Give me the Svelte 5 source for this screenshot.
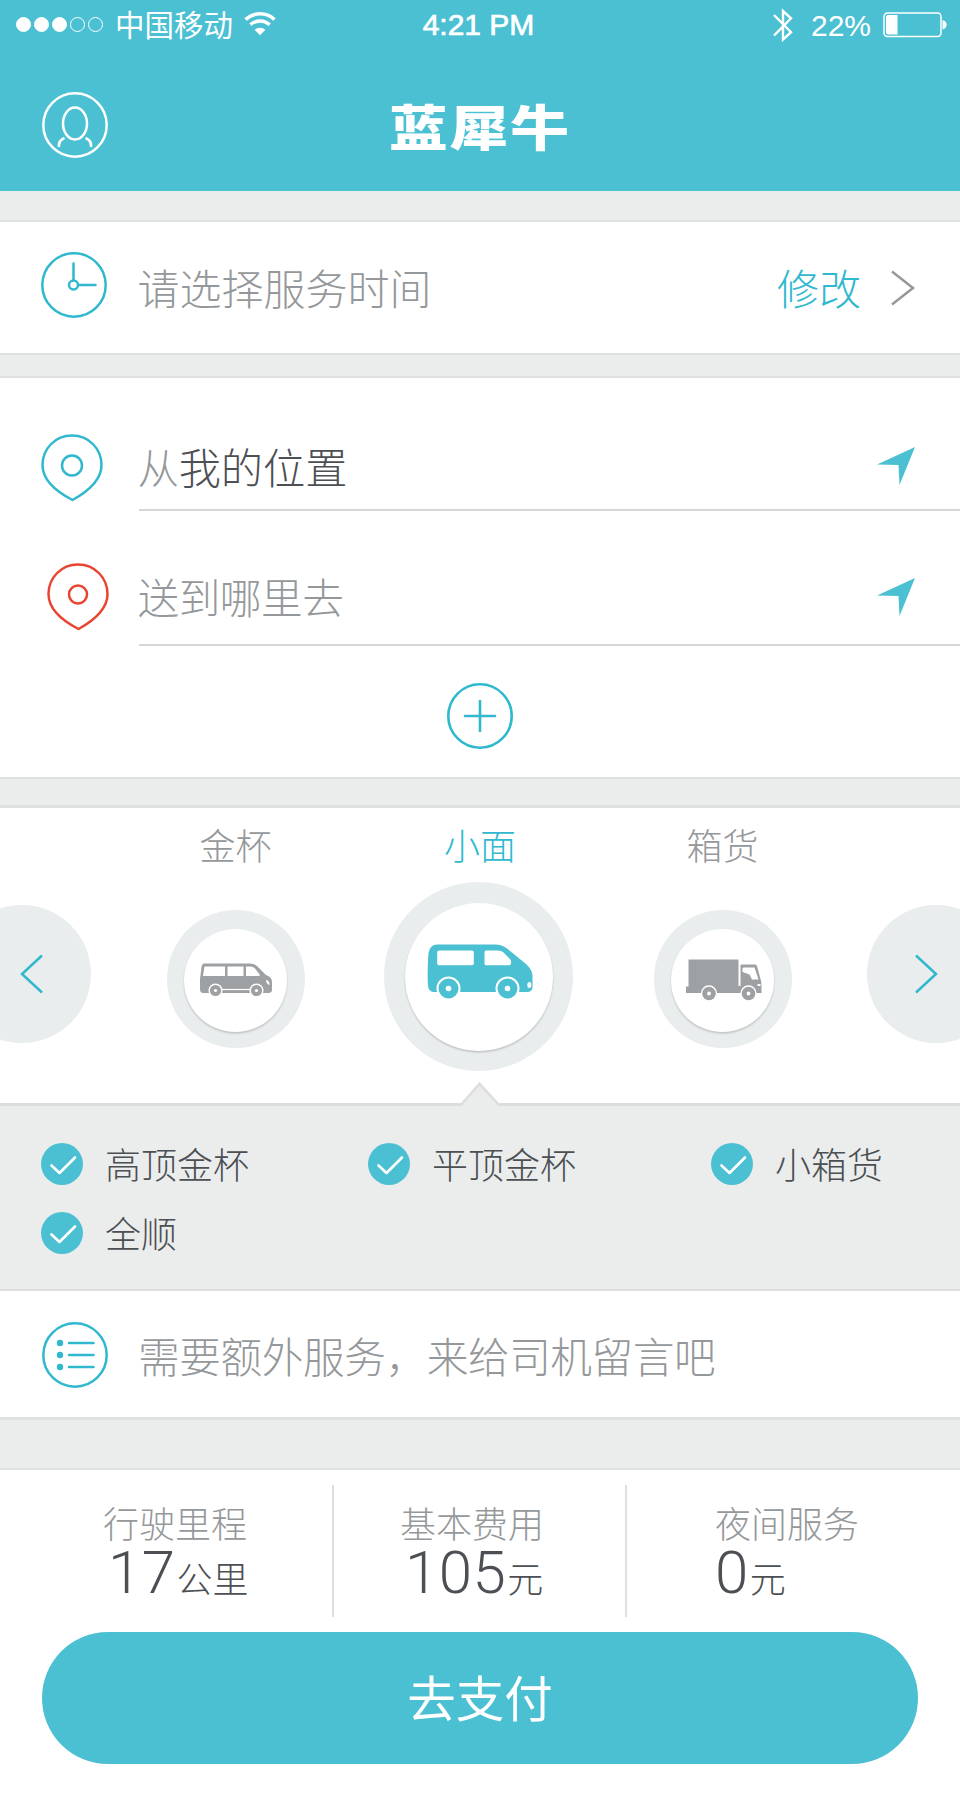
<script>
  const signal = [true, true, true, false, false];
  const places = [
    { kind: 'from', prefix: '从', value: '我的位置' },
    { kind: 'to', prefix: '送到哪里去', value: '' }
  ];
  const vehicles = [
    { name: '金杯', icon: 'van', active: false },
    { name: '小面', icon: 'mini', active: true },
    { name: '箱货', icon: 'truck', active: false }
  ];
  const options = ['高顶金杯', '平顶金杯', '小箱货', '全顺'];
  const costs = [
    { label: '行驶里程', amount: '17', unit: '公里' },
    { label: '基本费用', amount: '105', unit: '元' },
    { label: '夜间服务', amount: '0', unit: '元' }
  ];
</script>

<div class="app">
  <header>
    <div class="status">
      <div class="left">
        <div class="dots">
          {#each signal as on}<i class:on></i>{/each}
        </div>
        <span class="carrier">中国移动</span>
        <svg class="wifi" width="32" height="24" viewBox="0 0 32 24" fill="none" stroke="#fff">
          <path d="M1.5 7.6a21 21 0 0 1 29 0" stroke-width="3.4" />
          <path d="M6.4 12.8a14 14 0 0 1 19.2 0" stroke-width="3.4" />
          <path d="M16 23.2l-5.4-5.4a8 8 0 0 1 10.8 0z" fill="#fff" stroke="none" />
        </svg>
      </div>
      <span class="clock">4:21 PM</span>
      <div class="right">
        <svg width="20" height="35" viewBox="0 0 20 35" fill="none" stroke="#fff" stroke-width="2.4">
          <path d="M1 7l17 17.2-8 7.3V3l8 7.3L1 27.5" />
        </svg>
        <span class="percent">22%</span>
        <svg width="64" height="26" viewBox="0 0 64 26">
          <rect x="1" y="1" width="57" height="23.5" rx="3.5" fill="none" stroke="#fff" stroke-width="1.5" />
          <path d="M5 3h9.500v19.500H5a2 2 0 0 1-2-2V5a2 2 0 0 1 2-2z" fill="#fff" />
          <path d="M59.500 8c5.500 1 5.500 8.500 0 9.500z" fill="#fff" />
        </svg>
      </div>
    </div>
    <div class="nav">
      <svg class="user" width="66" height="66" viewBox="0 0 66 66" fill="none" stroke="#fff" stroke-width="2.5">
        <circle cx="33" cy="33" r="31.700" />
        <ellipse cx="33" cy="31.500" rx="12" ry="16" />
        <path d="M22.500 46c-4 1.500-6 4.500-5.500 9M43.500 46c4 1.500 6 4.500 5.500 9" />
      </svg>
      <h1>蓝犀牛</h1>
    </div>
  </header>

  <div class="gap first"></div>

  <section class="time">
    <svg width="66" height="66" viewBox="0 0 66 66" fill="none" stroke="#30b8ce" stroke-width="2.5" stroke-linecap="round">
      <circle cx="33" cy="33" r="31.700" />
      <circle cx="32.500" cy="33" r="4.500" />
      <path d="M32.500 28V11.500M37.500 33H54.500" />
    </svg>
    <span class="txt">请选择服务时间</span>
    <span class="edit">修改</span>
    <svg width="24" height="36" viewBox="0 0 24 36" fill="none" stroke="#95989a" stroke-width="2.500">
      <path d="M1 1.500L22 18L1 34.500" />
    </svg>
  </section>

  <div class="gap second"></div>

  <section class="places">
    {#each places as p}
      <div class="place {p.kind}">
        <svg class="pin" width="62" height="68" viewBox="0 0 62 68" fill="none" stroke-width="2.500">
          <path d="M31 1.500C14 1.500 1.500 15 1.500 31C1.500 47 16 58 31.500 66C46 58 60.500 47 60.500 31C60.500 15 48 1.500 31 1.500z" />
          <circle cx="31" cy="31.500" r={p.kind === 'from' ? 10 : 9} />
        </svg>
        <div class="field">
          <span>{p.prefix}{#if p.value}<b>{p.value}</b>{/if}</span>
          <svg width="38" height="38" viewBox="0 0 38 38"><path d="M0 17.500L38 0L22.500 38L21.500 18z" fill="#4bc0d3" /></svg>
        </div>
      </div>
    {/each}
    <svg class="add" width="66" height="66" viewBox="0 0 66 66" fill="none" stroke="#30b8ce" stroke-width="2.600" stroke-linecap="round">
      <circle cx="33" cy="33" r="31.700" />
      <path d="M33 18V48M18 33H48" />
    </svg>
  </section>

  <div class="gap third"></div>

  <section class="vehicles">
    <div class="ball prev">
      <svg width="24" height="40" viewBox="0 0 24 40" fill="none" stroke="#30b8ce" stroke-width="2.500"><path d="M22 1.500L2 20L22 38.500" /></svg>
    </div>
    {#each vehicles as v}
      <div class="vehicle" class:active={v.active}>
        <span>{v.name}</span>
        <div class="slot">
          <div class="ring">
            <div class="disc">
              {#if v.icon === 'van'}
                <svg width="72" height="34" viewBox="0 0 72 34">
                  <path d="M4 0.500H50Q54 0.500 57 3L66 12Q72 14 72 19V27Q72 30 68 30H3Q0 30 0 26V16L1.500 4Q2 0.500 4 0.500z" fill="#9da1a4" />
                  <path d="M4.500 3.500H25V13H3zM27.500 3.500H43.500V13H27.500zM46 3.500H50.500Q53 3.500 55 5.500L60 12Q60 13 58 13H46zM66 17Q70 18 69.500 22Q66 21 66 17z" fill="#fff" />
                  <path d="M21 26.500H51" stroke="#fff" stroke-width="1.200" />
                  <circle cx="15.500" cy="27.500" r="7" fill="#fff" /><circle cx="15.500" cy="27.500" r="5.600" fill="#9da1a4" /><circle cx="15.500" cy="27.500" r="1.600" fill="#fff" />
                  <circle cx="56.500" cy="27.500" r="7" fill="#fff" /><circle cx="56.500" cy="27.500" r="5.600" fill="#9da1a4" /><circle cx="56.500" cy="27.500" r="1.600" fill="#fff" />
                </svg>
              {:else if v.icon === 'mini'}
                <svg width="106" height="55" viewBox="0 0 106 55">
                  <path d="M10 0.500H68Q75 0.500 80 4.500L99 20Q105.500 26 105.500 32V43Q105.500 48 100 48H7Q2 48 1 42Q0 28 1.500 9Q3 0.500 10 0.500z" fill="#4bc0d3" />
                  <path d="M12 6.500H45Q46.800 6.500 46.800 8.500V19.500Q46.800 21.300 45 21.300H12Q10.200 21.300 10.200 19.500V8.500Q10.200 6.500 12 6.500zM59 6.500H71Q74 6.500 76 8L83 15Q84.500 17 84 19.500Q83.800 21.300 82 21.300H59Q57.500 21.300 57.500 19.500V8.500Q57.500 6.500 59 6.500z" fill="#fff" />
                  <ellipse cx="102.300" cy="41" rx="2" ry="3" fill="#fff" />
                  <circle cx="21.500" cy="44.500" r="12" fill="#fff" /><circle cx="21.500" cy="44.500" r="10" fill="#4bc0d3" /><circle cx="21.500" cy="44.500" r="2.800" fill="#fff" />
                  <circle cx="80.500" cy="44.500" r="12" fill="#fff" /><circle cx="80.500" cy="44.500" r="10" fill="#4bc0d3" /><circle cx="80.500" cy="44.500" r="2.800" fill="#fff" />
                </svg>
              {:else}
                <svg class="truck" width="76" height="42" viewBox="0 0 76 42">
                  <path d="M2.500 0.500H52.500V27H54.500V6Q54.500 5.500 55.500 5.500H69Q70.500 5.500 71 7L74.500 20Q75.500 23 75.500 26V34H0V27.500H2.500z" fill="#9da1a4" />
                  <path d="M57.500 8.500H68.500L72.500 20.500H66L63.500 15.500L56.500 13V9.500z" fill="#fff" />
                  <path d="M71.500 25H74.500V27H71.500z" fill="#fff" />
                  <circle cx="23" cy="34.500" r="8.200" fill="#fff" /><circle cx="23" cy="34.500" r="6.800" fill="#9da1a4" /><circle cx="23" cy="34.500" r="1.900" fill="#fff" />
                  <circle cx="62.500" cy="34.500" r="8.200" fill="#fff" /><circle cx="62.500" cy="34.500" r="6.800" fill="#9da1a4" /><circle cx="62.500" cy="34.500" r="1.900" fill="#fff" />
                </svg>
              {/if}
            </div>
          </div>
        </div>
      </div>
    {/each}
    <div class="ball next">
      <svg width="24" height="40" viewBox="0 0 24 40" fill="none" stroke="#30b8ce" stroke-width="2.500"><path d="M2 1.500L22 20L2 38.500" /></svg>
    </div>
  </section>

  <section class="options">
    <svg class="notch" width="40" height="25" viewBox="0 0 40 25"><path d="M0 25L1.500 23L19.500 1.500L39 23L40 25z" fill="#ebeded" /><path d="M0.500 23.500L19.500 1.800L39.500 23.500" fill="none" stroke="#dcdddd" stroke-width="2.500" /></svg>
    {#each options as o}
      <div class="option">
        <svg width="42" height="42" viewBox="0 0 42 42"><circle cx="21" cy="21" r="21" fill="#4bc0d3" /><path d="M10.500 22.500L18.500 30L34 14.500" fill="none" stroke="#fff" stroke-width="2.600" stroke-linecap="round" stroke-linejoin="round" /></svg>
        <span>{o}</span>
      </div>
    {/each}
  </section>

  <section class="message">
    <svg width="66" height="66" viewBox="0 0 66 66" fill="none" stroke="#30b8ce" stroke-width="2.500" stroke-linecap="round">
      <circle cx="33" cy="33" r="31.700" />
      <path d="M27 21H51.500M27 33H51.500M27 45H51.500" />
      <g fill="#30b8ce" stroke="none"><circle cx="18" cy="21" r="3.200" /><circle cx="18" cy="33" r="3.200" /><circle cx="18" cy="45" r="3.200" /></g>
    </svg>
    <span>需要额外服务，来给司机留言吧</span>
  </section>

  <div class="gap fourth"></div>

  <footer>
    <div class="costs">
      {#each costs as c}
        <div class="cost">
          <div class="label">{c.label}</div>
          <div class="value"><span class="num">{c.amount}</span><span class="unit">{c.unit}</span></div>
        </div>
      {/each}
    </div>
    <button>去支付</button>
  </footer>
</div>

<style>
  :global(body) { background: #fff; }
  .app {
    width: 960px;
    height: 1800px;
    overflow: hidden;
    background: #fff;
    color: #95989a;
    font-family: "Noto Sans CJK SC", sans-serif;
    font-weight: 300;
    font-size: 41.7px;
  }
  svg { display: block; flex: none; }
  span { white-space: nowrap; }

  header { height: 191px; background: #4bc0d3; color: #fff; }
  .status {
    display: grid;
    grid-template-columns: 1fr auto 1fr;
    align-items: center;
    height: 50px;
    padding: 0 13px 0 16px;
  }
  .left, .right, .dots { display: flex; align-items: center; }
  .dots { gap: 3px; margin-top: -1px; }
  .dots i { box-sizing: border-box; width: 15px; height: 15px; border: 1.5px solid #fff; border-radius: 50%; }
  .dots .on { background: #fff; }
  .carrier { margin: -5px 0 0 12px; font-size: 29.500px; line-height: 40px; font-weight: 400; }
  .wifi { margin: -2px 0 0 11px; }
  .clock, .percent { font: 400 30px/36px "Liberation Sans", Arial, sans-serif; }
  .clock { margin-right: 6px; -webkit-text-stroke: 0.7px #fff; }
  .right { justify-content: flex-end; }
  .percent { margin: 1px 12px 0 18px; }
  .nav {
    display: grid;
    grid-template-columns: 66px 1fr 66px;
    align-items: center;
    height: 66px;
    padding: 41px 42px 0;
  }
  .user { margin-top: 1px; }
  h1 { margin: 0; font-size: 58px; line-height: 66px; font-weight: 900; letter-spacing: 2px; text-align: center; transform: scale(1.012, 0.85); }

  .gap { box-sizing: border-box; background: #ebeded; border: 0 solid #dfe0e0; }
  .first { height: 31px; border-bottom-width: 2px; }
  .second { height: 25px; border-width: 2px 0; }
  .third { height: 31px; border-width: 2px 0 3px; }
  .fourth { height: 53px; border-width: 3px 0 2px; }

  .time { display: flex; align-items: center; height: 131px; padding: 0 45px 0 41px; }
  .time > svg:first-child { margin-top: -5px; }
  .txt { flex: 1; margin: -2px 0 0 30.500px; font-size: 42px; }
  .edit { margin: -2px 30px 0 0; color: #30b8ce; font-size: 42px; }

  .places { height: 399px; }
  .place { display: flex; }
  .from { height: 133px; }
  .to { height: 135px; }
  .pin { margin: 56px 0 0 41px; stroke: #30b8ce; }
  .to .pin { margin: 52px 0 0 47px; stroke: #e94431; }
  .field {
    display: flex;
    align-items: center;
    justify-content: space-between;
    flex: 1;
    margin-left: 36px;
    padding: 44px 45px 0 0;
    border-bottom: 2px solid #d5d6d7;
  }
  .field span { margin-left: -1.500px; }
  .from b { margin-left: -0.500px; font-size: 42.200px; }
  .to .field { margin-left: 30px; padding-top: 37px; letter-spacing: -0.5px; }
  .field b { color: #4c4f53; font-weight: 300; }
  .to .field svg { margin-top: 1px; }
  .add { margin: 37px auto 0; }

  .vehicles { display: grid; grid-template-columns: 91px 289px 198px 289px 93px; height: 295px; overflow: hidden; }
  .ball { display: flex; align-items: center; width: 138px; height: 138px; margin-top: 97px; border-radius: 50%; background: #e9eded; }
  .prev { margin-left: -47px; justify-content: center; }
  .next { justify-content: center; }
  .prev svg { margin-left: 20px; }
  .next svg { margin-right: 21px; }
  .vehicle { display: flex; flex-direction: column; align-items: center; font-size: 36px; }
  .vehicle > span { height: 74px; line-height: 73px; }
  .slot { display: flex; align-items: center; height: 194px; }
  .ring { display: flex; align-items: center; justify-content: center; width: 138px; height: 138px; border-radius: 50%; background: #e9eded; }
  .disc { display: flex; align-items: center; justify-content: center; width: 103px; height: 103px; margin-top: 2px; border-radius: 50%; background: #fff; box-shadow: 0 1.500px 2px rgb(0 0 0 / 0.18); }
  .disc svg { margin-top: -1px; }
  .disc .truck { margin-left: 2px; }
  .active { color: #30b8ce; }
  .active > span { margin-left: 2px; }
  .active .slot { height: 189px; margin-left: -1px; }
  .active .ring { width: 189px; height: 189px; }
  .active .disc { width: 148px; height: 148px; margin-top: 0; }
  .active .disc svg { margin: -11px 0 0 2px; }

  .options {
    position: relative;
    box-sizing: border-box;
    display: grid;
    grid-template-columns: 327px 343px 1fr;
    grid-auto-rows: 69px;
    height: 188px;
    padding: 23px 0 0 41px;
    border: solid #dcdddd;
    border-width: 3px 0 2px;
    background: #ebeded;
    color: #4c4f53;
    font-size: 36px;
  }
  .notch { position: absolute; left: 460px; top: -24px; }
  .option { display: flex; align-items: center; gap: 22px; }
  .option span { margin-top: -2px; }

  .message { display: flex; align-items: center; gap: 30px; height: 128px; margin-bottom: -2px; padding-left: 42px; letter-spacing: -0.450px; }

  .fourth { position: relative; }
  .costs { display: grid; grid-template-columns: 334px 293px 1fr; height: 132px; padding-top: 15px; }
  .cost { box-sizing: border-box; padding-left: 103px; border-right: 2px solid #dfe0e1; }
  .cost:nth-child(2) { padding-left: 66px; }
  .cost:nth-child(3) { padding-left: 88px; border: 0; }
  .label { font-size: 36px; line-height: 40px; padding-top: 17px; }
  .value { display: flex; align-items: baseline; height: 60px; margin-top: 1px; padding-left: 5px; color: #4c4f53; line-height: 60px; }
  .cost:nth-child(3) .value { padding-left: 0; }
  .num { font-family: Roboto, "Liberation Sans", sans-serif; font-size: 60px; letter-spacing: 0.5px; }
  .unit { font-size: 36px; margin-left: 1px; }
  button {
    display: block;
    width: 876px;
    height: 132px;
    margin: 15px auto 0;
    padding: 0 0 4px;
    border: 0;
    border-radius: 66px;
    background: #4bc0d3;
    color: #fff;
    font: 400 48.500px/60px "Noto Sans CJK SC", sans-serif;
  }
</style>
